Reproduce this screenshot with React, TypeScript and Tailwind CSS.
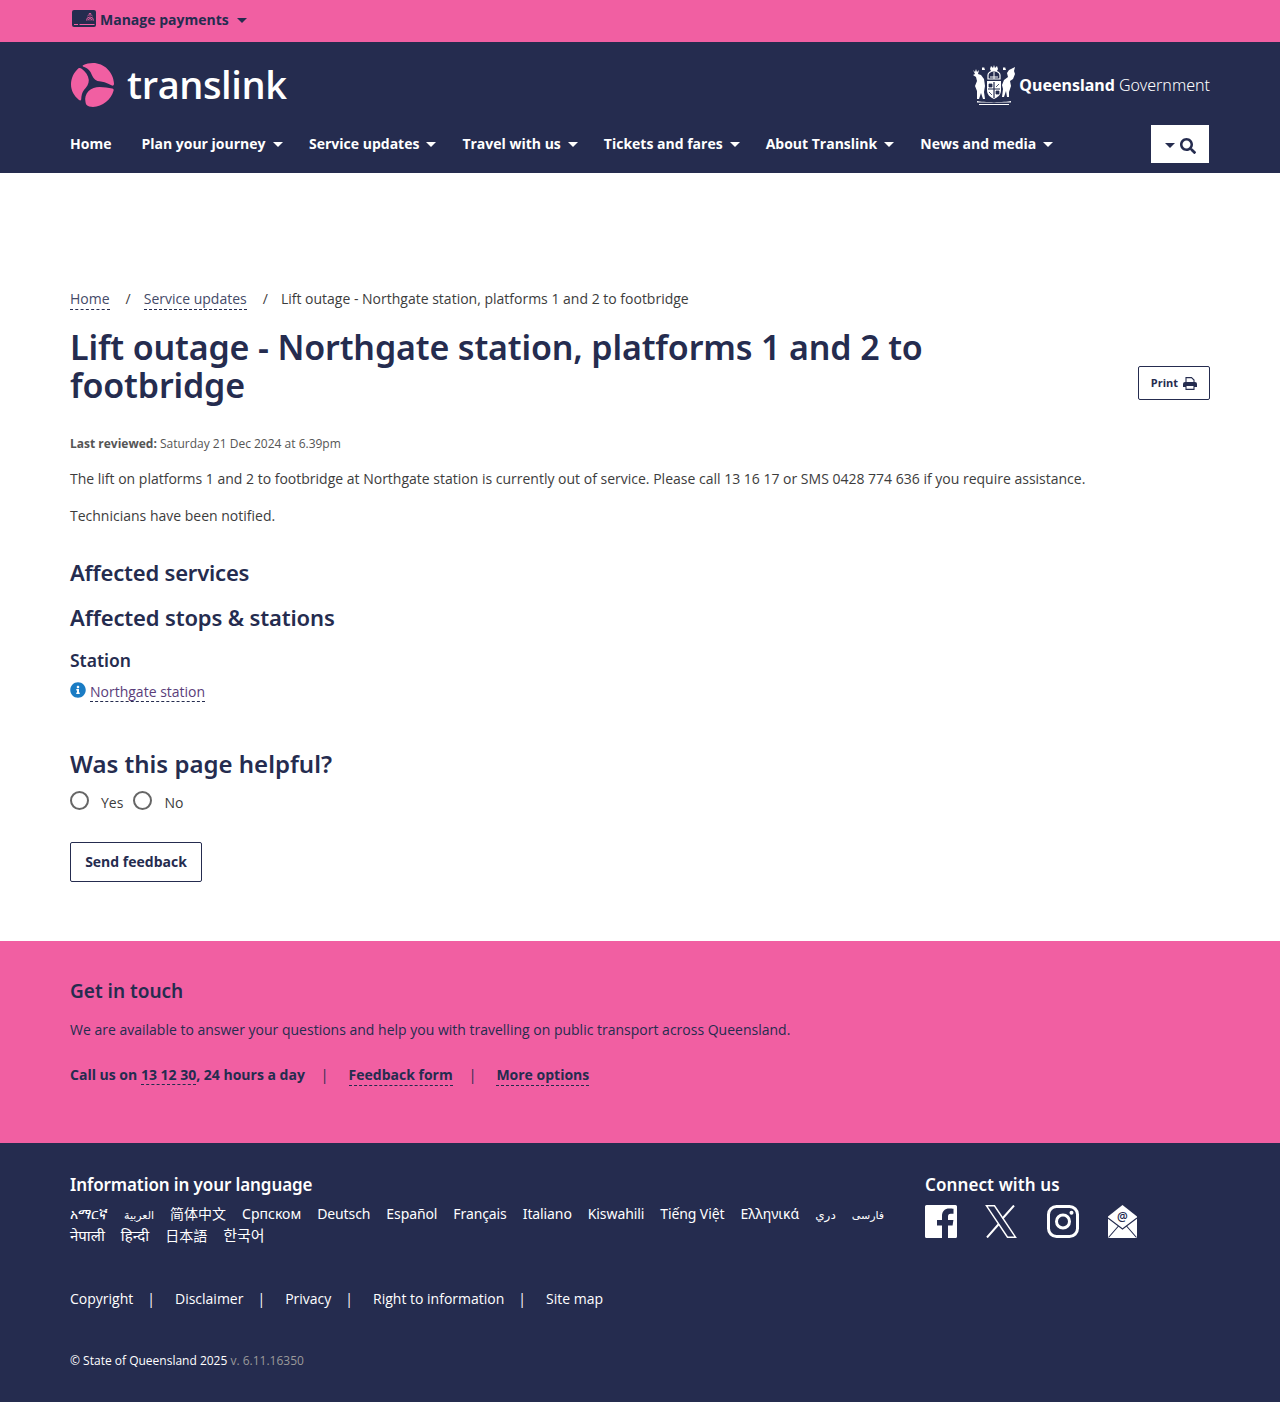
import { FaInfoCircle, FaSearch } from "react-icons/fa"

const navItems = [
  { label: "Home", gap: "mr-[30px]", caret: false },
  { label: "Plan your journey", gap: "mr-[26.5px]", caret: true },
  { label: "Service updates", gap: "mr-[26px]", caret: true },
  { label: "Travel with us", gap: "mr-[26px]", caret: true },
  { label: "Tickets and fares", gap: "mr-[26px]", caret: true },
  { label: "About Translink", gap: "mr-[26px]", caret: true },
  { label: "News and media", gap: "", caret: true },
]

const languages = [
  { label: "አማርኛ", cls: "" },
  { label: "العربية", cls: "text-[11px]" },
  { label: "简体中文", cls: "" },
  { label: "Српском", cls: "" },
  { label: "Deutsch", cls: "tracking-[-0.1px]" },
  { label: "Español", cls: "tracking-[-0.1px]" },
  { label: "Français", cls: "tracking-[-0.1px]" },
  { label: "Italiano", cls: "tracking-[-0.1px]" },
  { label: "Kiswahili", cls: "tracking-[-0.1px]" },
  { label: "Tiếng Việt", cls: "tracking-[-0.1px]" },
  { label: "Ελληνικά", cls: "" },
  { label: "دري", cls: "text-[12px]" },
  { label: "فارسی", cls: "text-[11px]" },
  { label: "नेपाली", cls: "text-[15px]" },
  { label: "हिन्दी", cls: "text-[15px]" },
  { label: "日本語", cls: "" },
  { label: "한국어", cls: "text-[15px]" },
]

const footerLinks = ["Copyright", "Disclaimer", "Privacy", "Right to information", "Site map"]

function Caret({ className }: { className: string }) {
  return <span className={`inline-block h-0 w-0 border-x-[5px] border-t-[5px] border-x-transparent ${className}`} />
}

function Dash({ children }: { children: React.ReactNode }) {
  return <a className="border-b border-dashed border-[#252c4f]">{children}</a>
}

function TranslinkMark() {
  return (
    <svg width="44" height="44" viewBox="0 0 44 44" className="shrink-0" fill="#f15fa2">
      <path d="M12 2.2 C15 0.8 18.5 0 22 0 C33 0 42.5 9 43 20.5 C43 22 42.4 23 41 22.6 C36 19.5 31 18.6 26.5 18 C22.5 16.5 21.5 13 19.5 9 C17.5 6 15 4.5 12.5 3.8 C11.6 3.4 11.4 2.6 12 2.2 Z" />
      <path d="M7.5 5.2 C8.5 4.6 9.8 5 11 6 C14.5 8.8 17.4 12.4 17.8 17 C18 21 15.6 24 13 27 C11 29.5 10.4 33 10.2 36.4 C10 37.6 9 37.8 8 37 C3 33 0 27.5 0 21.6 C0 15.2 2.8 9.4 7.5 5.2 Z" />
      <path d="M14.5 39 C13.6 35 14.6 31 17.6 28 C20.6 25.2 24.4 24 28.6 24 C33 24 37.4 25 41.2 25.4 C42.4 25.6 43 26.4 42.6 27.6 C40 37 31.6 43.6 22 44 C19.4 44 16.8 43.4 15.4 41.8 C14.9 41 14.6 40 14.5 39 Z" />
    </svg>
  )
}

function CoatOfArms() {
  return (
    <svg width="44" height="42" viewBox="0 0 44 42" className="shrink-0" fill="#fff">
      <path d="M1 6 l2 2 l1 -3 l1 3 l2 -2 l-1 4 l3 1 l3 4 l1 7 l-1 6 l1 7 h-2 l-2 -6 l-2 6 h-2 l0 -8 l-2 -5 l2 -5 l-1 -4 l-3 -2 l2 -1 Z" />
      <path d="M43 3 l-1 4 l1 3 l-2 5 l-3 2 l1 5 l-2 6 l0 5 h-2 l-1 -6 l-2 6 h-2 l1 -8 l-1 -4 l2 -5 l4 -3 l-1 -4 l2 -3 Z" />
      <path d="M15 17 h14 v9 c0 5 -3 7 -7 9 c-4 -2 -7 -4 -7 -9 Z" />
      <path d="M21.4 18 h1.2 v16 h-1.2 Z M16 24.4 h12 v1.2 h-12 Z" fill="#252c4f" />
      <path d="M17 20 h3 v3 h-3 Z M24 27 h3 v3 h-3 Z M17 28 l3 3 M27 20 l-3 3" fill="#252c4f" stroke="#252c4f" strokeWidth="0.8" />
      <path d="M16 11 a6 4 0 0 1 12 0 l0 4 h-12 Z" fill="none" stroke="#fff" strokeWidth="1.2" />
      <path d="M18 13 h8 M22 8 v7" stroke="#fff" strokeWidth="1" />
      <path d="M18 5 l1 -3 l2 2 l1 -3 l1 3 l2 -2 l1 3 l-1 2 h-6 Z" />
      <path d="M10 3 l1 1 l1 -1 l1 3 h-3 Z M31 3 l1 1 l1 -1 l1 3 h-3 Z" />
      <path d="M5 37 c6 1.5 28 1.5 34 0 v1.4 h-34 Z M7 40 h30 v1 h-30 Z" />
    </svg>
  )
}

function CardIcon() {
  return (
    <svg width="24" height="17" viewBox="0 0 24 17" className="-mt-[3px] shrink-0">
      <rect width="24" height="17" rx="2" fill="#252c4f" />
      <path d="M2 14.5h4M7.5 14.5h15" stroke="#f15fa2" strokeWidth="1" />
      <path d="M14.5 10.5a3.5 3.5 0 0 1 7 0M16 10.5a2 2 0 0 1 4 0M18 10.5v-1M15.5 6a3.2 3.2 0 0 1 5 0M16.8 3.8a2 2 0 0 1 2.4 0" stroke="#f15fa2" strokeWidth="0.9" fill="none" />
    </svg>
  )
}

function PrintIcon() {
  return (
    <svg width="14" height="13" viewBox="0 0 14 13" className="shrink-0" fill="#252c4f">
      <path d="M3 5.5 V0.6 H8.5 L11 3 V5.5" fill="none" stroke="#252c4f" strokeWidth="1.1" />
      <path d="M0 7 Q0 5 2 5 H12 Q14 5 14 7 V10 H0 Z" />
      <path d="M3 9 V12.4 H11 V9" fill="#fff" stroke="#252c4f" strokeWidth="1.1" />
    </svg>
  )
}

function FacebookIcon() {
  return (
    <svg width="32" height="33" viewBox="0 0 32 33" className="shrink-0">
      <path fillRule="evenodd" fill="#fff" d="M1.5 0 H30.5 Q32 0 32 1.5 V31.5 Q32 33 30.5 33 H23 V20.5 H27.6 L28.4 15 H23 V11.6 C23 10 23.6 8.8 25.8 8.8 H28.5 V3.8 C27.6 3.6 26 3.4 24.2 3.4 C20 3.4 17 6 17 10.8 V15 H12 V20.5 H17 V33 H1.5 Q0 33 0 31.5 V1.5 Q0 0 1.5 0 Z" />
    </svg>
  )
}

function XIcon() {
  return (
    <svg width="32" height="33" viewBox="0 0 32 33" className="shrink-0" fill="none" stroke="#fff">
      <path d="M1.5 0.8 H9.5 L30.5 32.2 H22.5 Z" strokeWidth="1.5" />
      <path d="M29 0.5 L17.5 13.5 M2 32.5 L13.8 19" strokeWidth="2" />
    </svg>
  )
}

function InstagramIcon() {
  return (
    <svg width="32" height="33" viewBox="0 0 32 33" className="shrink-0" fill="none" stroke="#fff">
      <rect x="1.5" y="1.5" width="29" height="30" rx="8" strokeWidth="3" />
      <circle cx="16" cy="16.5" r="6.5" strokeWidth="3" />
      <circle cx="24.5" cy="7.8" r="2" fill="#fff" stroke="none" />
    </svg>
  )
}

function MailIcon() {
  return (
    <svg width="29" height="33" viewBox="0 0 29 33" className="shrink-0">
      <path d="M14.5 0 L29 11.5 V33 H0 V11.5 Z" fill="#fff" />
      <path d="M0 13 L14.5 24 L29 13 M0.5 32.5 L10.5 21 M28.5 32.5 L18.5 21" fill="none" stroke="#252c4f" strokeWidth="1.1" />
      <text x="14.5" y="16" textAnchor="middle" fontSize="12" fontFamily="Open Sans, sans-serif" fontWeight="600" fill="#252c4f">@</text>
    </svg>
  )
}

export default function App() {
  return (
    <div className="min-h-[1402px] bg-white font-['Open_Sans',sans-serif] text-[14px] text-[#3c3c3c]">
      <div className="h-[42px] bg-[#f15fa2]">
        <div className="mx-auto flex w-[1140px] items-center pl-[2px] pt-[10px]">
          <CardIcon />
          <span className="ml-[4px] text-[14px] font-bold leading-[20px] text-[#252c4f]">Manage payments</span>
          <Caret className="ml-[8px] border-t-[#252c4f]" />
        </div>
      </div>

      <header className="h-[131px] bg-[#252c4f]">
        <div className="mx-auto w-[1140px]">
          <div className="flex h-[83px] items-start justify-between">
            <div className="mt-[21px] flex items-center pl-[1px]">
              <TranslinkMark />
              <span className="-mt-[2px] ml-[12px] text-[38px] font-semibold leading-[44px] tracking-[-0.4px] text-white">translink</span>
            </div>
            <div className="mt-[22px] flex items-center">
              <CoatOfArms />
              <span className="ml-[3px] font-['Noto_Sans',sans-serif] text-[16px] leading-[42px] text-white">
                <b className="font-bold">Queensland</b> <span className="font-light">Government</span>
              </span>
            </div>
          </div>
          <nav className="flex items-start">
            <ul className="flex flex-1 items-center pt-[9px]">
              {navItems.map((item) => (
                <li key={item.label} className={`flex items-center text-[14px] font-bold leading-[20px] text-white ${item.gap}`}>
                  {item.label}
                  {item.caret && <Caret className="ml-[7px] mt-[1px] border-t-white" />}
                </li>
              ))}
            </ul>
            <div className="mr-[1px] flex h-[38px] w-[58px] items-center justify-center gap-[5px] bg-white pt-[3px]">
              <Caret className="border-t-[#252c4f]" />
              <FaSearch className="h-[16px] w-[16px] text-[#252c4f]" />
            </div>
          </nav>
        </div>
      </header>

      <main className="mx-auto w-[1140px] pt-[116px]">
        <div className="flex items-baseline text-[14px] leading-[20px]">
          <a className="border-b border-dashed border-[#252c4f] text-[#444a68]">Home</a>
          <span className="ml-[16px] mr-[13px]">/</span>
          <a className="border-b border-dashed border-[#252c4f] text-[#444a68]">Service updates</a>
          <span className="ml-[16px] mr-[13px]">/</span>
          <span>Lift outage - Northgate station, platforms 1 and 2 to footbridge</span>
        </div>

        <div className="mt-[18px] flex items-end justify-between">
          <h1 className="w-[900px] font-['Noto_Sans',sans-serif] text-[34px] font-semibold leading-[38px] tracking-[-0.15px] text-[#252c4f]">
            Lift outage - Northgate station, platforms 1 and 2 to footbridge
          </h1>
          <button className="mb-[4px] flex h-[34px] w-[72px] items-center justify-center gap-[5px] rounded-[2px] border border-[#252c4f] text-[11px] font-bold text-[#252c4f]">
            Print <PrintIcon />
          </button>
        </div>

        <p className="mt-[31px] text-[12px] leading-[18px] text-[#555]"><b>Last reviewed:</b> Saturday 21 Dec 2024 at 6.39pm</p>
        <p className="mt-[16px] leading-[20px]">
          The lift on platforms 1 and 2 to footbridge at Northgate station is currently out of service. Please call 13 16 17 or SMS 0428 774 636 if you require assistance.
        </p>
        <p className="mt-[17px] leading-[20px]">Technicians have been notified.</p>

        <h2 className="mt-[31px] font-['Noto_Sans',sans-serif] text-[22px] font-semibold leading-[30px] tracking-[-0.2px] text-[#252c4f]">Affected services</h2>
        <h2 className="mt-[15px] font-['Noto_Sans',sans-serif] text-[22px] font-semibold leading-[30px] tracking-[-0.15px] text-[#252c4f]">Affected stops &amp; stations</h2>
        <h3 className="mt-[15px] font-['Noto_Sans',sans-serif] text-[17.5px] font-semibold leading-[26px] text-[#252c4f]">Station</h3>
        <div className="mt-[8px] flex items-start">
          <FaInfoCircle className="mt-[1px] h-[16px] w-[16px] text-[#1a7cc4]" />
          <a className="ml-[4px] mt-[1px] border-b border-dashed border-[#252c4f] leading-[19px] text-[#5a3d7a]">Northgate station</a>
        </div>

        <h2 className="mt-[45px] font-['Noto_Sans',sans-serif] text-[24px] font-semibold leading-[34px] text-[#252c4f]">Was this page helpful?</h2>
        <div className="mt-[7px] flex items-center">
          <span className="h-[19px] w-[19px] rounded-full border-2 border-[#666]" />
          <span className="ml-[12px] mt-[5px] leading-[20px]">Yes</span>
          <span className="ml-[10px] h-[19px] w-[19px] rounded-full border-2 border-[#666]" />
          <span className="ml-[12px] mt-[5px] leading-[20px]">No</span>
        </div>
        <button className="mt-[29px] h-[40px] w-[132px] rounded-[2px] border border-[#252c4f] pb-[2px] text-[14px] font-bold text-[#252c4f]">Send feedback</button>
      </main>

      <section className="mt-[59px] h-[202px] bg-[#f15fa2] text-[#252c4f]">
        <div className="mx-auto w-[1140px] pt-[36px]">
          <h2 className="font-['Noto_Sans',sans-serif] text-[19px] font-semibold leading-[28px]">Get in touch</h2>
          <p className="mt-[15px] leading-[20px]">We are available to answer your questions and help you with travelling on public transport across Queensland.</p>
          <div className="mt-[25px] flex items-baseline font-bold leading-[20px]">
            <span>Call us on <Dash>13 12 30</Dash>, 24 hours a day</span>
            <span className="ml-[16px] mr-[20px] font-normal">|</span>
            <Dash>Feedback form</Dash>
            <span className="ml-[16px] mr-[20px] font-normal">|</span>
            <Dash>More options</Dash>
          </div>
        </div>
      </section>

      <footer className="h-[259px] bg-[#252c4f] text-white">
        <div className="mx-auto w-[1140px] pt-[29px]">
          <div className="flex">
            <div className="w-[855px]">
              <h2 className="font-['Noto_Sans',sans-serif] text-[17px] font-semibold leading-[26px] tracking-[-0.1px]">Information in your language</h2>
              <ul className="mt-[5px] flex w-[830px] flex-wrap items-baseline gap-x-[16px] font-['Noto_Sans','DejaVu_Sans','Noto_Sans_CJK_SC',sans-serif] text-[14px] leading-[21px]">
                {languages.map((lang) => <li key={lang.label} className={lang.cls}>{lang.label}</li>)}
              </ul>
            </div>
            <div>
              <h2 className="font-['Noto_Sans',sans-serif] text-[17px] font-semibold leading-[26px] tracking-[0.1px]">Connect with us</h2>
              <div className="mt-[7px] flex items-center">
                <FacebookIcon />
                <span className="ml-[28px]"><XIcon /></span>
                <span className="ml-[30px]"><InstagramIcon /></span>
                <span className="ml-[29px]"><MailIcon /></span>
              </div>
            </div>
          </div>
          <ul className="mt-[43px] flex items-center leading-[20px]">
            {footerLinks.map((link, i) => (
              <li key={link} className="flex items-center">
                {link}
                {i < footerLinks.length - 1 && <span className="ml-[14px] mr-[20px]">|</span>}
              </li>
            ))}
          </ul>
          <p className="mt-[42px] text-[12px] leading-[20px]">© State of Queensland 2025 <span className="text-[#9a9a9a]">v. 6.11.16350</span></p>
        </div>
      </footer>
    </div>
  )
}
